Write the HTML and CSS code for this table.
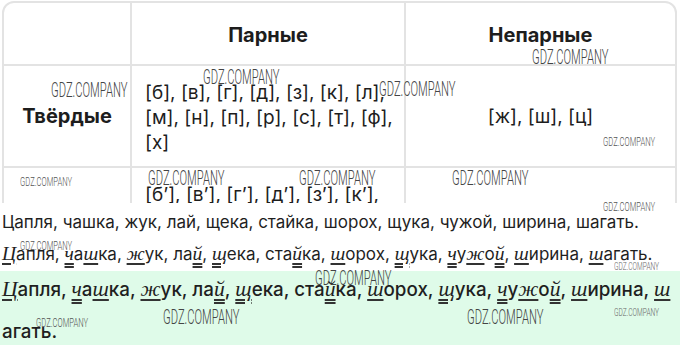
FILE: index.html
```html
<!DOCTYPE html>
<html lang="ru">
<head>
<meta charset="utf-8">
<title>Парные и непарные согласные</title>
<link rel="stylesheet" href="styles.css">
</head>
<body>
<div class="page">
  <div class="card-clip">
    <div class="card">
      <table class="grid">
        <tr class="r-head">
          <th class="c1"></th>
          <th class="c2">Парные</th>
          <th class="c3">Непарные</th>
        </tr>
        <tr class="r-hard">
          <th class="c1">Твёрдые</th>
          <td class="c2 list">[б], [в], [г], [д], [з], [к], [л],<br>[м], [н], [п], [р], [с], [т], [ф],<br>[х]</td>
          <td class="c3 center">[ж], [ш], [ц]</td>
        </tr>
        <tr class="r-soft">
          <th class="c1">Мягкие</th>
          <td class="c2 list">[б’], [в’], [г’], [д’], [з’], [к’],<br>[л’], [м’], [н’], [п’], [р’], [с’],<br>[т’], [ф’], [х’]</td>
          <td class="c3 center">[й’], [ч’], [щ’]</td>
        </tr>
      </table>
    </div>
  </div>

  <p class="line plain">Цапля, чашка, жук, лай, щека, стайка, шорох, щука, чужой, ширина, шагать.</p>

  <p class="line marked"><span class="h">Ц</span>апля, <span class="s">ч</span>а<span class="h">ш</span>ка, <span class="h">ж</span>ук, ла<span class="s">й</span>, <span class="s">щ</span>ека, ста<span class="s">й</span>ка, <span class="h">ш</span>орох, <span class="s">щ</span>ука, <span class="s">ч</span>у<span class="h">ж</span>о<span class="s">й</span>, <span class="h">ш</span>ирина, <span class="h">ш</span>агать.</p>

  <div class="answer">
    <p class="line marked strong"><span class="h">Ц</span>апля, <span class="s">ч</span>а<span class="h">ш</span>ка, <span class="h">ж</span>ук, ла<span class="s">й</span>, <span class="s">щ</span>ека, ста<span class="s">й</span>ка, <span class="h">ш</span>орох, <span class="s">щ</span>ука, <span class="s">ч</span>у<span class="h">ж</span>о<span class="s">й</span>, <span class="h">ш</span>ирина, <span class="h">ш</span><br>агать.</p>
  </div>

  <span class="wm big" style="left:51px;top:80px">GDZ.COMPANY</span>
  <span class="wm big" style="left:203px;top:67px">GDZ.COMPANY</span>
  <span class="wm big" style="left:379px;top:79px">GDZ.COMPANY</span>
  <span class="wm big" style="left:532px;top:47px">GDZ.COMPANY</span>
  <span class="wm small" style="left:603px;top:136px">GDZ.COMPANY</span>
  <span class="wm small" style="left:20px;top:176px">GDZ.COMPANY</span>
  <span class="wm big" style="left:148px;top:168px">GDZ.COMPANY</span>
  <span class="wm big" style="left:299px;top:168px">GDZ.COMPANY</span>
  <span class="wm big" style="left:452px;top:168px">GDZ.COMPANY</span>
  <span class="wm small" style="left:603px;top:201px">GDZ.COMPANY</span>
  <span class="wm small" style="left:20px;top:240px">GDZ.COMPANY</span>
  <span class="wm big" style="left:315px;top:268px">GDZ.COMPANY</span>
  <span class="wm tiny" style="left:614px;top:261px">GDZ.COMPANY</span>
  <span class="wm big" style="left:163px;top:307px">GDZ.COMPANY</span>
  <span class="wm big" style="left:467px;top:307px">GDZ.COMPANY</span>
  <span class="wm tiny" style="left:614px;top:307px">GDZ.COMPANY</span>
  <span class="wm small" style="left:36px;top:317px">GDZ.COMPANY</span>
</div>
</body>
</html>
```

FILE: styles.css
```css
* { box-sizing: border-box; }

html, body {
  margin: 0;
  padding: 0;
  background: #ffffff;
}

.page {
  position: relative;
  width: 680px;
  height: 345px;
  overflow: hidden;
  font-family: Inter, "Noto Sans", sans-serif;
  color: #1f1f1f;
}

/* ---------- table card ---------- */
.card-clip {
  height: 203px;
  overflow: hidden;
  padding: 1px 3px 0 2px;
}

.card {
  border: 2px solid #e3e3e3;
  border-radius: 12px;
  overflow: hidden;
}

.grid {
  width: 100%;
  border-collapse: separate;
  border-spacing: 0;
  table-layout: fixed;
}

.grid th,
.grid td {
  border-right: 2px solid #e3e3e3;
  border-bottom: 2px solid #e3e3e3;
  font-size: 20px;
  line-height: 25px;
  color: #1d1d1d;
  vertical-align: middle;
  padding: 0;
}

.grid th:last-child,
.grid td:last-child { border-right: 0; }

.grid th { font-weight: 700; text-align: center; }

.grid .c1 { width: 128px; }
.grid .c2 { width: 274px; }

.r-head th { height: 63px; padding-top: 4px; }
.r-hard th, .r-hard td { height: 102px; }
.r-soft th, .r-soft td { height: 102px; }

.grid td { font-size: 19px; }

.grid .list {
  font-weight: 400;
  padding: 2px 2px 0 13px;
  text-align: left;
}

.center { text-align: center; font-weight: 400; }

/* ---------- text lines ---------- */
.line {
  margin: 0;
  padding-left: 2px;
  font-size: 17px;
  line-height: 24px;
  white-space: nowrap;
}

.plain { margin-top: 7px; }

.marked { margin-top: 8px; }

.answer {
  margin-top: 5px;
  background: #dffbe9;
  height: 80px;
}

.answer .line {
  margin-top: 0;
  line-height: 42px;
  position: relative;
  top: -3px;
}

.strong { font-weight: 500; font-size: 18.8px; }

.h, .s {
  font-family: "Liberation Serif", "DejaVu Serif", serif;
  font-style: italic;
  font-size: 1.15em;
  text-decoration-line: underline;
  text-decoration-thickness: 1.5px;
  text-underline-offset: 3px;
  text-decoration-color: #333;
}

.s { text-decoration-style: double; }

/* ---------- watermarks ---------- */
.wm {
  position: absolute;
  font-family: Roboto, "DejaVu Sans", sans-serif;
  font-weight: 300;
  line-height: 1;
  white-space: nowrap;
  transform-origin: 0 0;
  color: #444;
}

.wm.big { font-size: 20px; transform: scaleX(0.56); }
.wm.small { font-size: 12.5px; transform: scaleX(0.61); color: #555; }
.wm.tiny { font-size: 11px; transform: scaleX(0.6); color: #666; }
```
